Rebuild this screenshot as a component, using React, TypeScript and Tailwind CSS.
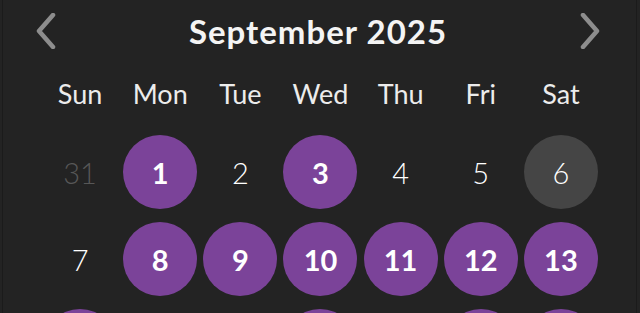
import React from 'react';

type Day = {
  n: number;
  muted?: boolean;
  marked?: boolean;
  today?: boolean;
};

const weekdays = ['Sun', 'Mon', 'Tue', 'Wed', 'Thu', 'Fri', 'Sat'];

const weeks: Day[][] = [
  [
    { n: 31, muted: true },
    { n: 1, marked: true },
    { n: 2 },
    { n: 3, marked: true },
    { n: 4 },
    { n: 5 },
    { n: 6, today: true },
  ],
  [
    { n: 7 },
    { n: 8, marked: true },
    { n: 9, marked: true },
    { n: 10, marked: true },
    { n: 11, marked: true },
    { n: 12, marked: true },
    { n: 13, marked: true },
  ],
  [
    { n: 14, marked: true },
    { n: 15 },
    { n: 16 },
    { n: 17, marked: true },
    { n: 18 },
    { n: 19, marked: true },
    { n: 20, marked: true },
  ],
];

const Chevron = ({ dir }: { dir: 'left' | 'right' }) => (
  <svg width="20" height="36" viewBox="0 0 20 36" className="shrink-0">
    <polyline
      points={dir === 'left' ? '17,2 3,18 17,34' : '3,2 17,18 3,34'}
      fill="none"
      stroke="#8d8d8d"
      strokeWidth="4.5"
      strokeLinecap="round"
      strokeLinejoin="round"
    />
  </svg>
);

const DayCell = ({ day }: { day: Day }) => {
  let cls = 'text-white font-light';
  if (day.muted) cls = 'text-[#575757] font-light';
  if (day.marked) cls = 'bg-[#7b4399] text-white font-bold';
  if (day.today) cls = 'bg-[#454545] text-white font-light';

  return (
    <div className="flex justify-center">
      <div className={`w-[74px] h-[74px] rounded-full flex items-center justify-center text-[29px] leading-none ${cls}`}>
        {day.n}
      </div>
    </div>
  );
};

export default function App() {
  return (
    <div
      className="h-[313px] overflow-hidden bg-[#232323] pl-[2px] pr-[3px]"
      style={{ fontFamily: 'Lato, "Noto Sans", sans-serif' }}
    >
      <div className="h-full border-x border-[#1b1b1b]">
        <div className="flex items-center justify-between h-[62px] pl-[33px] pr-[36px]">
          <Chevron dir="left" />
          <div className="text-[33px] font-bold tracking-[1px] text-[#f4f4f4] leading-none">September 2025</div>
          <Chevron dir="right" />
        </div>

        <div className="grid grid-cols-7 pl-[37px] pr-[35px] mt-[11px] h-[40px] items-center">
          {weekdays.map((d) => (
            <div key={d} className="text-center text-[27px] font-normal text-[#ececec] leading-none">
              {d}
            </div>
          ))}
        </div>

        <div className="grid grid-cols-7 gap-y-[13px] pl-[37px] pr-[35px] mt-[22px]">
          {weeks.flat().map((day, i) => (
            <DayCell key={i} day={day} />
          ))}
        </div>
      </div>
    </div>
  );
}
